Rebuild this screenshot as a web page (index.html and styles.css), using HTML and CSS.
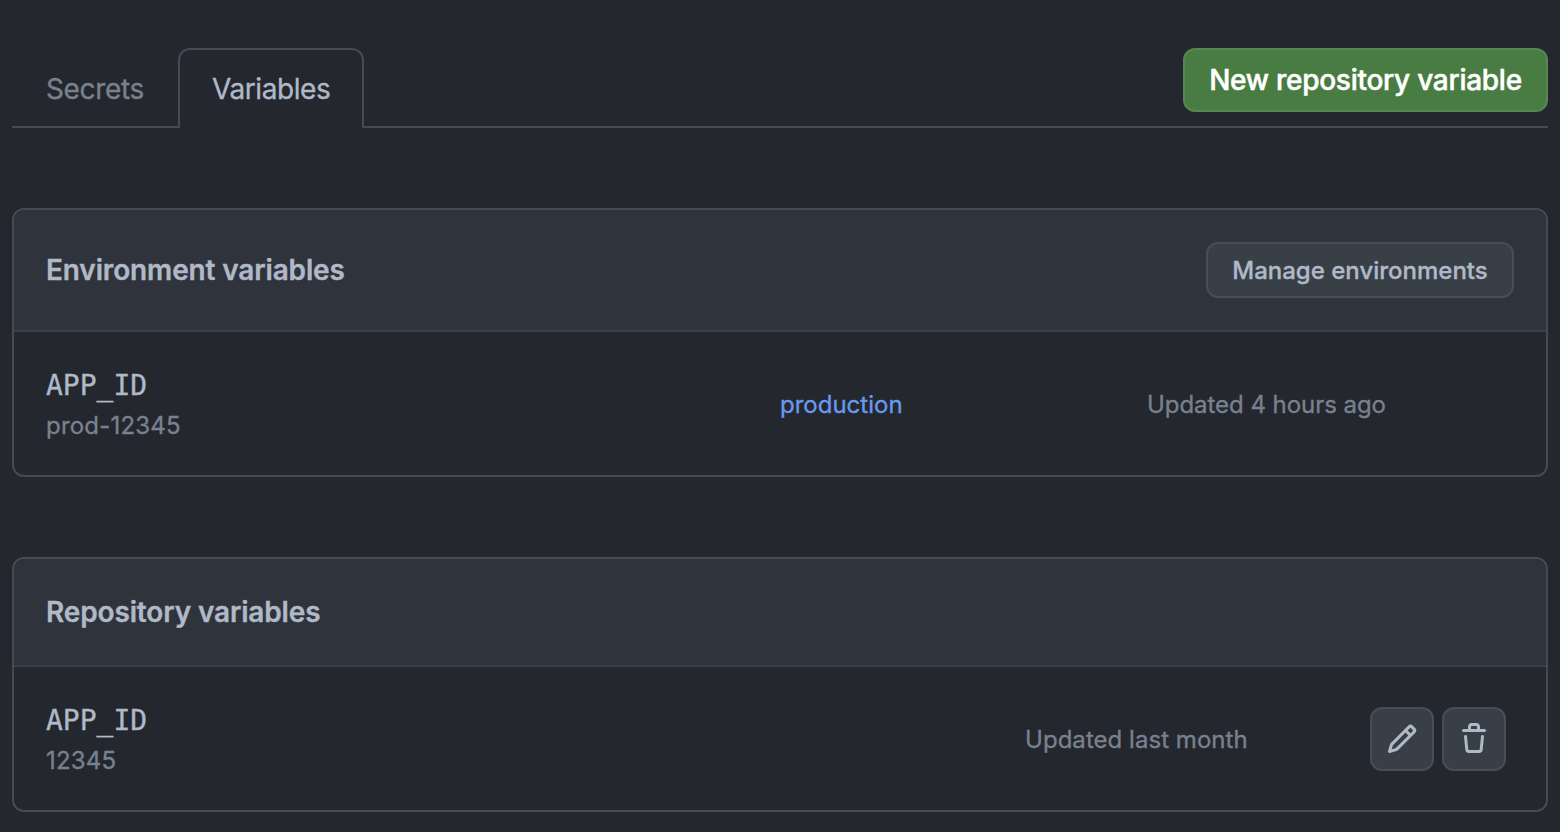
FILE: index.html
```html
<!DOCTYPE html>
<html lang="en">
<head>
<meta charset="utf-8">
<title>Actions variables</title>
<link rel="stylesheet" href="styles.css">
</head>
<body>
<nav class="tabs">
  <a class="tab">Secrets</a>
  <a class="tab tab-selected">Variables</a>
  <div class="tabs-actions"><button class="btn btn-primary">New repository variable</button></div>
</nav>

<section class="box box-env">
  <header class="box-header">
    <h2>Environment variables</h2>
    <button class="btn btn-small">Manage environments</button>
  </header>
  <div class="row">
    <div class="variable">
      <code>APP_ID</code>
      <span class="value">prod-12345</span>
    </div>
    <a class="environment">production</a>
    <span class="updated updated-hours">Updated 4 hours ago</span>
  </div>
</section>

<section class="box box-repo">
  <header class="box-header">
    <h2>Repository variables</h2>
  </header>
  <div class="row">
    <div class="variable">
      <code>APP_ID</code>
      <span class="value">12345</span>
    </div>
    <span class="updated">Updated last month</span>
    <div class="actions">
      <button class="btn btn-icon" aria-label="Edit"><svg viewBox="0 0 16 16"><path d="M11.013 1.427a1.75 1.75 0 0 1 2.474 0l1.086 1.086a1.75 1.75 0 0 1 0 2.474l-8.61 8.61c-.21.21-.47.364-.756.445l-3.251.93a.75.75 0 0 1-.927-.928l.929-3.25c.081-.286.235-.547.445-.758l8.61-8.61Zm.176 4.823L9.75 4.81l-6.286 6.287a.253.253 0 0 0-.064.108l-.558 1.953 1.953-.558a.253.253 0 0 0 .108-.064Zm1.238-3.763a.25.25 0 0 0-.354 0L10.811 3.75l1.439 1.44 1.263-1.263a.25.25 0 0 0 0-.354Z"/></svg></button>
      <button class="btn btn-icon" aria-label="Delete"><svg viewBox="0 0 16 16"><path d="M11 1.75V3h2.25a.75.75 0 0 1 0 1.5H2.75a.75.75 0 0 1 0-1.5H5V1.75C5 .784 5.784 0 6.75 0h2.5C10.216 0 11 .784 11 1.75ZM4.496 6.675l.66 6.6a.25.25 0 0 0 .249.225h5.19a.25.25 0 0 0 .249-.225l.66-6.6a.75.75 0 0 1 1.492.149l-.66 6.6A1.748 1.748 0 0 1 10.595 15h-5.19a1.75 1.75 0 0 1-1.741-1.575l-.66-6.6a.75.75 0 1 1 1.492-.15ZM6.5 1.75V3h3V1.75a.25.25 0 0 0-.25-.25h-2.5a.25.25 0 0 0-.25.25Z"/></svg></button>
    </div>
  </div>
</section>
</body>
</html>
```
FILE: styles.css
```css
* { box-sizing: border-box; }

body {
  margin: 0;
  padding: 48px 12px 0;
  background: #24272e;
  color: #afb9c7;
  font: 400 28px/42px Inter, "Liberation Sans", sans-serif;
  -webkit-text-stroke: 0.35px currentColor;
  overflow: hidden;
}

.tabs {
  display: flex;
  height: 80px;
  border-bottom: 2px solid #454b54;
}

.tab {
  width: 166px;
  height: 80px;
  padding: 18px 32px 0;
  border: 2px solid transparent;
  border-bottom: 0;
  color: #77828e;
  letter-spacing: -0.35px;
}

.tab-selected {
  width: 186px;
  border-color: #454b54;
  border-radius: 12px 12px 0 0;
  background: #24272e;
  color: #afb9c7;
  letter-spacing: -0.42px;
}

.tabs-actions { margin-left: auto; }

.btn {
  display: flex;
  align-items: center;
  justify-content: center;
  padding: 0;
  border: 2px solid #484e57;
  border-radius: 12px;
  background: #383f47;
  color: #afb9c7;
  font: 500 24px/40px Inter, "Liberation Sans", sans-serif;
  -webkit-text-stroke: 0.35px currentColor;
  white-space: nowrap;
}

.btn-primary {
  width: 365px;
  height: 64px;
  border-color: #588550;
  background: #497c42;
  color: #fff;
  font-size: 28px;
  letter-spacing: -0.26px;
  -webkit-text-stroke-width: 0.5px;
}

.btn-small {
  width: 308px;
  height: 56px;
  padding-top: 2px;
}

.btn-icon { width: 64px; height: 64px; }

.btn-icon svg { width: 32px; height: 32px; fill: currentColor; }

.box {
  margin-top: 80px;
  border: 2px solid #454b54;
  border-radius: 12px;
  overflow: hidden;
}

.box-env { height: 269px; }
.box-repo { height: 255px; }

.box-header {
  display: flex;
  align-items: center;
  justify-content: space-between;
  height: 122px;
  padding: 0 32px;
  border-bottom: 2px solid #393e47;
  background: #2f333b;
}

.box-repo .box-header { height: 108px; }

h2 {
  margin: 0;
  font-size: 28px;
  font-weight: 600;
  letter-spacing: -0.14px;
}

.row {
  display: flex;
  align-items: center;
  height: 143px;
  padding: 0 40px 0 32px;
  font-size: 24px;
  line-height: 36px;
  color: #77828e;
  white-space: nowrap;
}

.variable {
  display: flex;
  flex: none;
  flex-direction: column;
  width: 734px;
  padding-top: 2px;
}

.box-repo .variable { width: 979px; }

code {
  color: #afb9c7;
  font: 28px/42px "DejaVu Sans Mono", monospace;
}

.value { line-height: 38px; letter-spacing: 0.2px; }

.environment { width: 367px; padding-top: 2px; color: #6899ef; }

.updated { padding-top: 2px; letter-spacing: 0.04px; }

.updated-hours { letter-spacing: -0.05px; }

.actions { display: flex; gap: 8px; margin-left: auto; }
```
